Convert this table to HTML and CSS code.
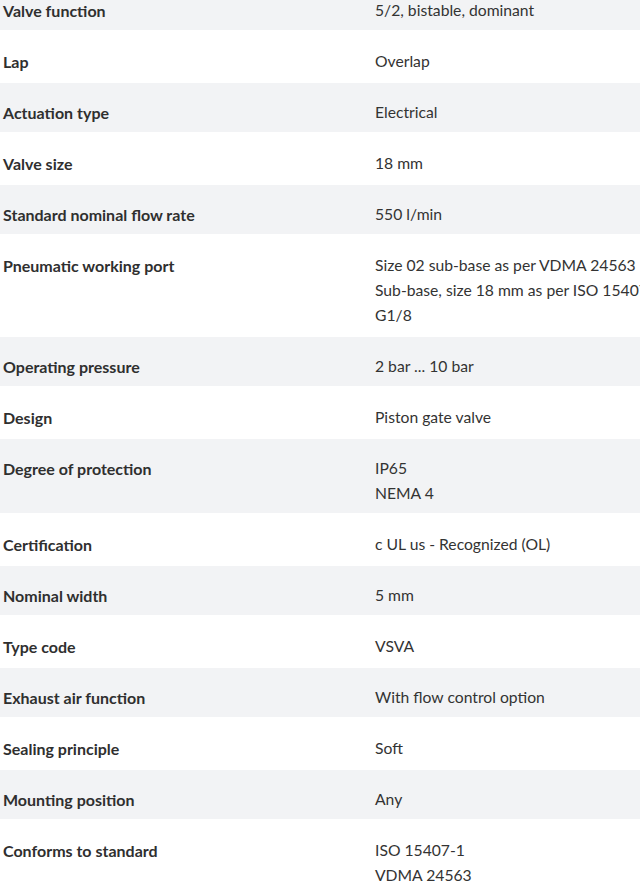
FILE: index.html
```html
<!DOCTYPE html>
<html lang="en">
<head>
<meta charset="utf-8">
<title>Technical data</title>
<link rel="stylesheet" href="styles.css">
</head>
<body>
<div class="specs">
  <div class="row"><div class="label">Valve function</div><div class="value">5/2, bistable, dominant</div></div>
  <div class="row"><div class="label">Lap</div><div class="value">Overlap</div></div>
  <div class="row"><div class="label">Actuation type</div><div class="value">Electrical</div></div>
  <div class="row"><div class="label">Valve size</div><div class="value">18 mm</div></div>
  <div class="row"><div class="label">Standard nominal flow rate</div><div class="value">550 l/min</div></div>
  <div class="row"><div class="label">Pneumatic working port</div><div class="value">Size 02 sub-base as per VDMA 24563<br>Sub-base, size 18 mm as per ISO 15407-1<br>G1/8</div></div>
  <div class="row"><div class="label">Operating pressure</div><div class="value">2 bar ... 10 bar</div></div>
  <div class="row"><div class="label">Design</div><div class="value">Piston gate valve</div></div>
  <div class="row"><div class="label">Degree of protection</div><div class="value">IP65<br>NEMA 4</div></div>
  <div class="row"><div class="label">Certification</div><div class="value">c UL us - Recognized (OL)</div></div>
  <div class="row"><div class="label">Nominal width</div><div class="value">5 mm</div></div>
  <div class="row"><div class="label">Type code</div><div class="value">VSVA</div></div>
  <div class="row"><div class="label">Exhaust air function</div><div class="value">With flow control option</div></div>
  <div class="row"><div class="label">Sealing principle</div><div class="value">Soft</div></div>
  <div class="row"><div class="label">Mounting position</div><div class="value">Any</div></div>
  <div class="row"><div class="label">Conforms to standard</div><div class="value">ISO 15407-1<br>VDMA 24563</div></div>
</div>
</body>
</html>
```

FILE: styles.css
```css
html, body {
  margin: 0;
  padding: 0;
  background: #fff;
  overflow: hidden;
}

.specs {
  width: 760px;
  margin-top: -19px;
  font-family: Lato, "Open Sans", sans-serif;
  font-size: 16px;
  line-height: 25px;
  color: #333;
}

.row {
  display: grid;
  grid-template-columns: 372px 1fr;
  padding: 17px 0 7px 3px;
  border-bottom: 2px solid #fff;
}

.row:nth-child(odd) {
  background: #f2f3f5;
}

.label {
  font-weight: 700;
  color: #2f2f2f;
}

.value {
  font-size: 15.7px;
  white-space: nowrap;
}
```
